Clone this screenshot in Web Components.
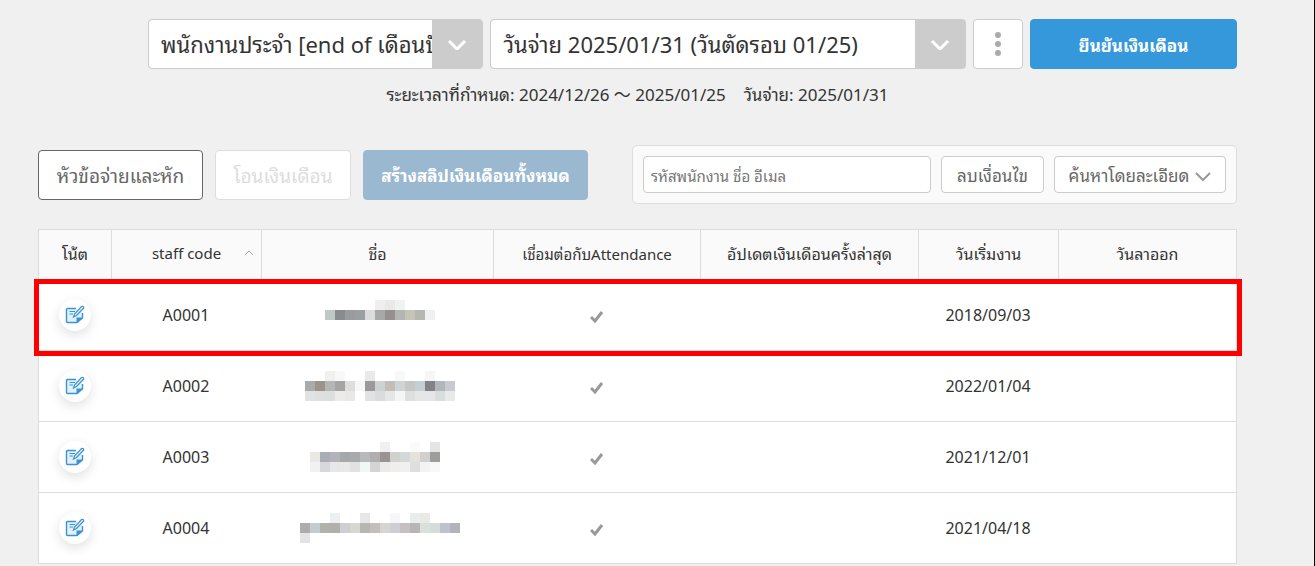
<!DOCTYPE html>
<html lang="th">
<head>
<meta charset="UTF-8">
<meta name="viewport" content="width=device-width, initial-scale=1">
<title>เงินเดือน</title>
<style>
  html {
    background: #f0f0f0;
  }

  body {
    margin: 0;
    min-height: 100vh;
    box-sizing: border-box;
    border-right: 1px solid #000;
    color: #333;
    font-family: "Noto Sans", "Noto Sans Thai Looped", "Loma", "Waree", "Noto Sans Thai", "Noto Sans CJK JP", sans-serif;
    font-size: 16px;
  }
</style>
</head>
<body>
<payroll-page></payroll-page>

<script>
class SelectBox extends HTMLElement {
  constructor() {
    super();
    this.attachShadow({ mode: "open" });
  }

  connectedCallback() {
    this.shadowRoot.innerHTML = `
      <style>
        :host {
          display: block;
          min-width: 0;
        }

        .box {
          display: flex;
          height: 50px;
          box-sizing: border-box;
          border: 1px solid #ccc;
          border-radius: 4px;
          background: #ccc;
          overflow: hidden;
        }

        select {
          appearance: none;
          flex: 1;
          min-width: 0;
          border: 0;
          border-radius: 3px 0 0 3px;
          padding: 0 0 0 12px;
          background: white;
          color: #333;
          font: inherit;
          font-size: 22px;
          text-overflow: clip;
        }

        .arrow {
          flex: 0 0 50px;
          display: flex;
          align-items: center;
          justify-content: center;
          pointer-events: none;
        }
      </style>

      <div class="box">
        <select aria-label="${this.getAttribute("label")}">
          <option>${this.getAttribute("value")}</option>
        </select>
        <span class="arrow">
          <svg width="20" height="12" viewBox="0 0 20 12" fill="none" stroke="white" stroke-width="3">
            <path d="M2 3l8 8 8-8"/>
          </svg>
        </span>
      </div>
    `;
  }
}

class ActionButton extends HTMLElement {
  constructor() {
    super();
    this.attachShadow({ mode: "open" });
  }

  connectedCallback() {
    const disabled = this.hasAttribute("disabled") ? "disabled" : "";
    const label = this.getAttribute("label");

    this.shadowRoot.innerHTML = `
      <style>
        :host {
          display: block;
          height: 50px;
        }

        :host([kind="small"]) {
          height: 37px;
          font-size: 17px;
        }

        button {
          display: flex;
          align-items: center;
          justify-content: center;
          gap: 6px;
          width: 100%;
          height: 100%;
          padding: 0;
          border: 1px solid #ccc;
          border-radius: 4px;
          background: white;
          color: #666;
          font: inherit;
          white-space: nowrap;
          cursor: pointer;
        }

        :host([kind="outline"]) button {
          border-color: #666;
          font-size: 19px;
        }

        :host([kind="muted"]) button {
          border-color: #ddd;
          color: #ddd;
          font-size: 19px;
        }

        :host([kind="primary"]) button {
          border-color: #3498db;
          background: #3498db;
          color: white;
          font-size: 17px;
          font-weight: bold;
        }

        :host([kind="faded"]) button {
          border-color: #9ab8cf;
          background: #9ab8cf;
          color: white;
          font-size: 17px;
          font-weight: bold;
        }
      </style>

      <button type="button" ${disabled} ${label ? `aria-label="${label}"` : ""}><slot></slot></button>
    `;
  }
}

class SearchPanel extends HTMLElement {
  constructor() {
    super();
    this.attachShadow({ mode: "open" });
  }

  connectedCallback() {
    this.shadowRoot.innerHTML = `
      <style>
        :host {
          display: flex;
          gap: 10px;
          box-sizing: border-box;
          padding: 10px;
          border: 1px solid #ddd;
          border-radius: 5px;
          background: #fafafa;
        }

        input {
          flex: 1;
          min-width: 0;
          height: 37px;
          box-sizing: border-box;
          border: 1px solid #ccc;
          border-radius: 4px;
          padding: 2px 7px 0;
          background: white;
          color: #333;
          font: inherit;
          font-size: 15px;
        }

        input::placeholder {
          color: #757575;
        }

        .clear {
          width: 103px;
        }

        .detail {
          width: 172px;
        }

        .detail svg {
          margin-top: 3px;
        }
      </style>

      <input type="text" aria-label="รหัสพนักงาน ชื่อ อีเมล" placeholder="รหัสพนักงาน ชื่อ อีเมล">
      <action-button class="clear" kind="small">ลบเงื่อนไข</action-button>
      <action-button class="detail" kind="small">ค้นหาโดยละเอียด
        <svg width="16" height="11" viewBox="0 0 16 11" fill="none" stroke="#999" stroke-width="2">
          <path d="M1 2l7 7 7-7"/>
        </svg>
      </action-button>
    `;
  }
}

// Pixelated name: one list of cell colours per line, "-" leaves the cell empty
class MaskedName extends HTMLElement {
  constructor() {
    super();
    this.attachShadow({ mode: "open" });
  }

  connectedCallback() {
    const lines = this.getAttribute("cells").split("|").map(line => line.trim().split(" "));
    const width = Math.max(...lines.map(line => line.length)) * 10;
    const rects = lines.map((line, y) => line.map((color, x) => (
      color === "-" ? "" : `<rect x="${x * 10}" y="${y * 10}" width="10" height="10" fill="#${color}"/>`
    )).join("")).join("");

    this.shadowRoot.innerHTML = `
      <style>
        :host {
          display: inline-block;
          vertical-align: middle;
        }

        svg {
          display: block;
        }
      </style>

      <svg width="${width}" height="30" shape-rendering="crispEdges" aria-hidden="true">${rects}</svg>
    `;
  }
}

class NoteButton extends HTMLElement {
  constructor() {
    super();
    this.attachShadow({ mode: "open" });
  }

  connectedCallback() {
    this.shadowRoot.innerHTML = `
      <style>
        :host {
          display: inline-block;
          vertical-align: middle;
        }

        button {
          display: flex;
          align-items: center;
          justify-content: center;
          width: 32px;
          height: 32px;
          padding: 0;
          border: 0;
          border-radius: 50%;
          background: white;
          box-shadow: 0 4px 12px rgba(0, 0, 0, 0.12);
          cursor: pointer;
        }
      </style>

      <button type="button" aria-label="โน้ต">
        <svg width="20" height="20" viewBox="0 0 20 20" fill="none" stroke="#3b93cf">
          <path d="M11 3.500H2.500Q1.500 3.500 1.500 4.500V16.500Q1.500 17.500 2.500 17.500H12L17.500 13V8" fill="#e3f1fa" stroke-width="1.400"/>
          <path d="M11.500 18V12.500H18Z" fill="#3b93cf" stroke="none"/>
          <path d="M4.500 6.500H10M4.500 9H8"/>
          <path d="M8.500 12l1-3 7-7.500q2-.6 2.300 1.500l-7.300 7.500z" fill="#e3f1fa" stroke-width="1.200"/>
        </svg>
      </button>
    `;
  }
}

class StaffTable extends HTMLElement {
  constructor() {
    super();
    this.attachShadow({ mode: "open" });
  }

  connectedCallback() {
    this.render();
  }

  render() {
    const staff = [
      {
        code: "A0001",
        start: "2018/09/03",
        cells: `- - - - - - f0efed e9e9e9 f1f3f3 - - - -
          | - c1c9c6 898b90 999c9c 9a9f9f dddcdd a6a9a8 949190 b4b5b5 c4c4b9 b6b7b3 eff0f2 -`
      },
      {
        code: "A0002",
        start: "2022/01/04",
        cells: `- - f0f0ef f7f8fa - - eae9e9 - - f8f8f8 - - f6f6f6 - -
          | a9abaa 9a948d b2b6b4 a8a4a4 dededd f5f7f9 9c999b cdd1d1 c3bdba ced3d4 c4c7c6 c4ced3 828288 b1b6bb c7cace
          | e1e3e2 dfdfdf dbdfde ecebea e8e8e6 - e0e2e3 d9dbdc e5e7e7 f5f5f5 dfdfdf e4e7e6 e4e6e8 dadde0 e8eaea`
      },
      {
        code: "A0003",
        start: "2021/12/01",
        cells: `- - - - - - - f0f0f0 - - fafafa - e5e5e5 -
          | e9e8e3 a9adb6 b2b3b9 a5a7ab a9abab b6babd b0aeb1 999491 d0d2cf d5d8d9 e4e2da d1d0cc 9d9d9c -
          | f1f1f1 d7d8dc e5e7ea ebe9e8 e2e2e2 f2f6f6 d4d4d4 ebebec efeeed f0f0f0 dedede f3f3f3 f8f8f6 -`
      },
      {
        code: "A0004",
        start: "2021/04/18",
        cells: `- - - edf0f0 - - e7e7e7 - - f5f8f8 - ebeded e9e9e6 - - -
          | adacad c5cbce b1b2ac b2b0ac cfcfd3 d8d8d3 b8b6b1 c3bfba d6d5d2 cecfd4 c5c1c0 b8b5b7 dce0da d6dcdd bfc1cb b1b4bc
          | e3e3e3 - - - - - - - - - - - - - - -`
      }
    ];

    const rows = staff.map(person => `
      <tr>
        <td><note-button></note-button></td>
        <td>${person.code}</td>
        <td class="name"><masked-name cells="${person.cells}"></masked-name></td>
        <td>
          <svg width="14" height="12" viewBox="0 0 14 12" fill="none" stroke="#999" stroke-width="3" role="img" aria-label="เชื่อมต่อแล้ว">
            <path d="M1 6l4 4 7-9"/>
          </svg>
        </td>
        <td></td>
        <td>${person.start}</td>
        <td></td>
      </tr>
    `).join("");

    this.shadowRoot.innerHTML = `
      <style>
        :host {
          display: block;
        }

        table {
          width: 100%;
          table-layout: fixed;
          border: 1px solid #ddd;
          border-bottom: 0;
          border-spacing: 0;
          background: white;
        }

        th,
        td {
          box-sizing: border-box;
          padding: 0;
          border-bottom: 1px solid #ddd;
          text-align: center;
          vertical-align: middle;
        }

        th {
          height: 50px;
          padding-bottom: 3px;
          border-right: 1px solid #ddd;
          background: #fafafa;
          font-weight: normal;
          white-space: nowrap;
        }

        th:last-child {
          border-right: 0;
        }

        .latin {
          font-size: 15px;
        }

        td {
          height: 71px;
          padding-right: 2px;
        }

        td svg {
          vertical-align: middle;
        }

        .name {
          padding-left: 6px;
        }

        .sort {
          display: grid;
          grid-template-columns: 17px 1fr 17px;
          align-items: center;
        }

        .sort span {
          grid-column: 2;
        }

        tbody tr:first-child {
          position: relative;
        }

        /* highlight frame around the first row */
        tbody tr:first-child td:first-child::after {
          content: "";
          position: absolute;
          inset: -1px -6px -5px -5px;
          border: 5px solid #f00;
          pointer-events: none;
        }
      </style>

      <table>
        <colgroup>
          <col style="width: 73px">
          <col style="width: 150px">
          <col style="width: 232px">
          <col style="width: 207px">
          <col style="width: 218px">
          <col style="width: 140px">
          <col>
        </colgroup>
        <thead>
          <tr>
            <th>โน้ต</th>
            <th class="latin">
              <div class="sort">
                <span>staff code</span>
                <svg width="10" height="8" viewBox="0 0 10 8" fill="none" stroke="#aaa">
                  <path d="M1 6l4-4 4 4"/>
                </svg>
              </div>
            </th>
            <th>ชื่อ</th>
            <th class="latin">เชื่อมต่อกับAttendance</th>
            <th>อัปเดตเงินเดือนครั้งล่าสุด</th>
            <th>วันเริ่มงาน</th>
            <th>วันลาออก</th>
          </tr>
        </thead>
        <tbody>${rows}</tbody>
      </table>
    `;
  }
}

class PayrollPage extends HTMLElement {
  constructor() {
    super();
    this.attachShadow({ mode: "open" });
  }

  connectedCallback() {
    this.shadowRoot.innerHTML = `
      <style>
        :host {
          display: block;
          padding: 19px 77px 0 38px;
        }

        header {
          display: flex;
          gap: 7px;
          padding-left: 110px;
        }

        .group {
          flex: 335;
        }

        .payday {
          flex: 475;
        }

        .more {
          flex: 0 0 50px;
        }

        .confirm {
          flex: 0 0 207px;
        }

        .period {
          display: flex;
          justify-content: center;
          gap: 18px;
          margin: 14px 0 38px;
          font-size: 17px;
          line-height: 24px;
        }

        .toolbar {
          display: flex;
          align-items: center;
          gap: 12px;
          margin-bottom: 25px;
        }

        .items {
          width: 165px;
        }

        .transfer {
          width: 136px;
        }

        .slips {
          width: 225px;
        }

        search-panel {
          flex: 1;
          max-width: 605px;
          margin-left: auto;
        }
      </style>

      <header>
        <select-box class="group" label="กลุ่มพนักงาน" value="พนักงานประจำ [end of เดือนปัจจุบัน]"></select-box>
        <select-box class="payday" label="วันจ่าย" value="วันจ่าย 2025/01/31 (วันตัดรอบ 01/25)"></select-box>
        <action-button class="more" label="เมนู">
          <svg width="6" height="24" viewBox="0 0 6 24" fill="#aaa">
            <circle cx="3" cy="3" r="3"/>
            <circle cx="3" cy="12" r="3"/>
            <circle cx="3" cy="21" r="3"/>
          </svg>
        </action-button>
        <action-button class="confirm" kind="primary">ยืนยันเงินเดือน</action-button>
      </header>

      <div class="period">
        <span>ระยะเวลาที่กำหนด: 2024/12/26 ～ 2025/01/25</span>
        <span>วันจ่าย: 2025/01/31</span>
      </div>

      <div class="toolbar">
        <action-button class="items" kind="outline">หัวข้อจ่ายและหัก</action-button>
        <action-button class="transfer" kind="muted" disabled>โอนเงินเดือน</action-button>
        <action-button class="slips" kind="faded" disabled>สร้างสลิปเงินเดือนทั้งหมด</action-button>
        <search-panel></search-panel>
      </div>

      <staff-table></staff-table>
    `;
  }
}

customElements.define("select-box", SelectBox);
customElements.define("action-button", ActionButton);
customElements.define("search-panel", SearchPanel);
customElements.define("masked-name", MaskedName);
customElements.define("note-button", NoteButton);
customElements.define("staff-table", StaffTable);
customElements.define("payroll-page", PayrollPage);
</script>
</body>
</html>
